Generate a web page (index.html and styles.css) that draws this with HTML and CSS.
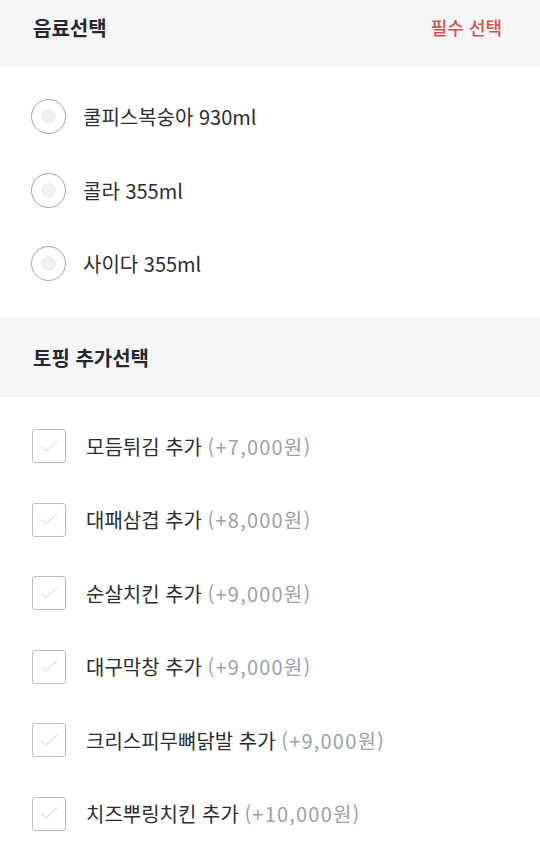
FILE: index.html
```html
<!DOCTYPE html>
<html lang="ko">
<head>
<meta charset="utf-8">
<link rel="stylesheet" href="styles.css">
</head>
<body>
<section class="group">
  <div class="group-head head-first">
    <h2 class="group-title">음료선택</h2>
    <span class="required">필수 선택</span>
  </div>
  <ul class="options radio-list">
    <li class="option"><span class="radio"><span class="radio-dot"></span></span><span class="label">쿨피스복숭아 930ml</span></li>
    <li class="option"><span class="radio"><span class="radio-dot"></span></span><span class="label">콜라 355ml</span></li>
    <li class="option"><span class="radio"><span class="radio-dot"></span></span><span class="label">사이다 355ml</span></li>
  </ul>
</section>
<section class="group">
  <div class="group-head head-second">
    <h2 class="group-title">토핑 추가선택</h2>
  </div>
  <ul class="options check-list">
    <li class="option"><span class="check"><svg viewBox="0 0 34 34" width="34" height="34"><polyline points="8,17 13,22 25,11" /></svg></span><span class="label">모듬튀김 추가 <span class="price">(+7,000원)</span></span></li>
    <li class="option"><span class="check"><svg viewBox="0 0 34 34" width="34" height="34"><polyline points="8,17 13,22 25,11" /></svg></span><span class="label">대패삼겹 추가 <span class="price">(+8,000원)</span></span></li>
    <li class="option"><span class="check"><svg viewBox="0 0 34 34" width="34" height="34"><polyline points="8,17 13,22 25,11" /></svg></span><span class="label">순살치킨 추가 <span class="price">(+9,000원)</span></span></li>
    <li class="option"><span class="check"><svg viewBox="0 0 34 34" width="34" height="34"><polyline points="8,17 13,22 25,11" /></svg></span><span class="label">대구막창 추가 <span class="price">(+9,000원)</span></span></li>
    <li class="option"><span class="check"><svg viewBox="0 0 34 34" width="34" height="34"><polyline points="8,17 13,22 25,11" /></svg></span><span class="label">크리스피무뼈닭발 추가 <span class="price">(+9,000원)</span></span></li>
    <li class="option"><span class="check"><svg viewBox="0 0 34 34" width="34" height="34"><polyline points="8,17 13,22 25,11" /></svg></span><span class="label">치즈뿌링치킨 추가 <span class="price">(+10,000원)</span></span></li>
  </ul>
</section>
</body>
</html>
```
FILE: styles.css
```css
* { box-sizing: border-box; }
html, body {
  margin: 0;
  padding: 0;
  background: #ffffff;
  font-family: "Noto Sans CJK KR", "Noto Sans", sans-serif;
  color: #2b2d31;
}
.group-head {
  background: #f4f5f7;
  display: flex;
  align-items: center;
  justify-content: space-between;
  padding: 0 38px 0 33px;
}
.head-first {
  height: 66px;
  padding-bottom: 12px;
}
.head-second {
  height: 79px;
}
.group-title {
  margin: 0;
  font-size: 20px;
  font-weight: 700;
  color: #24272c;
}
.required {
  font-size: 18px;
  font-weight: 500;
  color: #d0524c;
}
.options {
  list-style: none;
  margin: 0;
  padding: 0;
}
.radio-list {
  padding: 14px 0 17px;
}
.check-list {
  padding: 13px 0 0;
}
.option {
  height: 73.5px;
  display: flex;
  align-items: center;
  padding-left: 31px;
}
.radio {
  width: 35px;
  height: 35px;
  border: 1.5px solid #9ea2a8;
  border-radius: 50%;
  display: flex;
  align-items: center;
  justify-content: center;
  margin-right: 17px;
}
.radio-dot {
  width: 15px;
  height: 15px;
  border-radius: 50%;
  background: #eff0f3;
}
.check {
  width: 34px;
  height: 34px;
  border: 1.5px solid #b9bdc3;
  border-radius: 3px;
  display: flex;
  align-items: center;
  justify-content: center;
  margin-left: 1px;
  margin-right: 20px;
}
.check svg {
  width: 31px;
  height: 31px;
  fill: none;
  stroke: #e1e3e7;
  stroke-width: 1.6;
}
.label {
  font-size: 20px;
  color: #2b2d31;
}
.price {
  color: #9b9fa7;
  letter-spacing: 1.2px;
}
```
